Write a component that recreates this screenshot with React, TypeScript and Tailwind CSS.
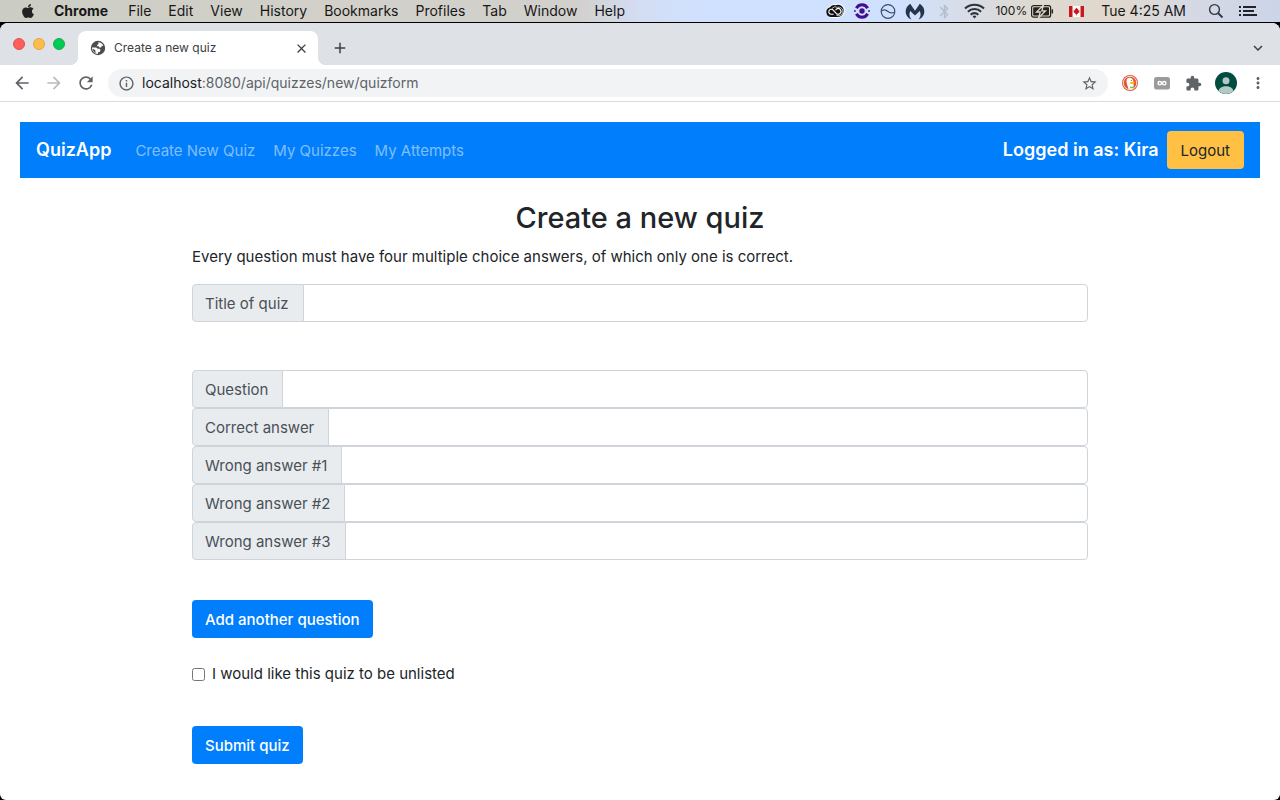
import { FaApple } from "react-icons/fa";
import {
  MdArrowBack,
  MdArrowForward,
  MdRefresh,
  MdInfoOutline,
  MdStarBorder,
  MdClose,
  MdAdd,
  MdExpandMore,
  MdMoreVert,
  MdExtension,
  MdBluetooth,
} from "react-icons/md";

const menus = ["File", "Edit", "View", "History", "Bookmarks", "Profiles", "Tab", "Window", "Help"];

const answerFields = [
  { id: "question", label: "Question" },
  { id: "correct", label: "Correct answer" },
  { id: "wrong1", label: "Wrong answer #1" },
  { id: "wrong2", label: "Wrong answer #2" },
  { id: "wrong3", label: "Wrong answer #3" },
];

function CloudIcon() {
  return (
    <svg width="20" height="16" viewBox="0 0 20 16" fill="none" aria-hidden="true">
      <path d="M6.500 15a6 6 0 0 1-2-11.500A6.500 6.500 0 0 1 10 1a6.800 6.800 0 0 1 9.600 6.800A6.800 6.800 0 0 1 13 15z" fill="#fff" />
      <path d="M6.300 14a5 5 0 0 1-1.400-9.800A5.800 5.800 0 0 1 10.500 2.200 5.900 5.900 0 0 1 18.700 8a5.900 5.900 0 0 1-5.900 6z" fill="#111" />
      <path d="M8.600 11.300H6.300a2.500 2.500 0 1 1 1.900-4.100l3 3.200a2.800 2.800 0 1 0 .2-4.200l-.9.900" stroke="#fff" strokeWidth="1.100" />
      <path d="M7 5.500a4.500 4.500 0 0 1 5.500-1.200 4.300 4.300 0 1 1-1.300 7.700" stroke="#fff" strokeWidth="0.700" />
    </svg>
  );
}

function EyeIcon() {
  return (
    <svg width="16" height="16" viewBox="0 0 16 16" fill="none" aria-hidden="true">
      <path d="M2.400 5.200a6.300 6.300 0 0 1 11.200 0M2.400 10.800a6.300 6.300 0 0 0 11.200 0" stroke="#43108f" strokeWidth="3" />
      <circle cx="8" cy="8" r="2.700" fill="#43108f" />
      <path d="M0 8h1.800M14.200 8H16" stroke="#43108f" strokeWidth="1.400" />
    </svg>
  );
}

function GaugeIcon() {
  return (
    <svg width="16" height="16" viewBox="0 0 16 16" fill="none" stroke="#3c4c66" strokeWidth="1.200" aria-hidden="true">
      <circle cx="8" cy="8.500" r="6.800" />
      <path d="M1.500 8.200c2.500-2.600 4.500-1.500 6.500.3s4.500 1.500 6.600.8" />
    </svg>
  );
}

function WingsIcon() {
  return (
    <svg width="20" height="17" viewBox="0 0 20 17" fill="#26354f" aria-hidden="true">
      <path d="M5.200.8C1 3.500-.2 8 1.300 11.800c.9 2.300 3 4 5.200 4.700-2.200-2.200-2.600-5.200-1.300-8.400L10 12.600l4.800-4.500c1.300 3.200.9 6.200-1.300 8.400 2.200-.7 4.300-2.400 5.200-4.700C20.200 8 19 3.500 14.800.8L10 7.800z" />
    </svg>
  );
}

function WifiIcon() {
  return (
    <svg width="21" height="16" viewBox="0 0 21 16" fill="none" stroke="#2d323c" strokeWidth="2.100" aria-hidden="true">
      <path d="M1 5.600a13.500 13.500 0 0 1 19 0M3.900 8.800a9.300 9.300 0 0 1 13.200 0M6.700 11.700a5.400 5.400 0 0 1 7.600 0" />
      <path d="M8.600 13.500 10.500 15.400l1.900-1.900a2.700 2.700 0 0 0-3.800 0z" fill="#2d323c" stroke="none" />
    </svg>
  );
}

function BatteryIcon() {
  return (
    <svg width="23" height="13" viewBox="0 0 23 13" fill="none" aria-hidden="true">
      <rect x="0.600" y="0.600" width="19" height="11.600" rx="2" stroke="#26231e" strokeWidth="1.200" />
      <rect x="2.200" y="2.200" width="15.800" height="8.400" rx="0.800" fill="#26231e" />
      <path d="M21.300 4.300v4.200" stroke="#26231e" strokeWidth="1.500" />
      <path d="m12.500 0-7 7h3.800L7.500 13l7-7.200h-3.700z" fill="#26231e" stroke="#ded7cf" strokeWidth="1.300" />
    </svg>
  );
}

function CanadaFlag() {
  return (
    <svg width="15" height="11" viewBox="0 0 15 11" aria-label="Canadian keyboard">
      <path fill="#fff" d="M0 0h15v11H0z" />
      <path fill="#c8171e" d="M0 0h3.500v11H0zM11.500 0H15v11h-3.500zM7.500 1.500l.8 1.500.9-.4-.2 2 1.500-.7-.4 1.400.5.600-2 1.500.2.800-1-.1V9.500h-.6V8.100l-1 .1.200-.8-2-1.500.5-.6L4.500 3.900l1.500.7-.2-2 .9.400z" />
    </svg>
  );
}

function SearchIcon() {
  return (
    <svg width="16" height="16" viewBox="0 0 16 16" fill="none" stroke="#33363f" strokeWidth="1.400" aria-hidden="true">
      <circle cx="6.500" cy="6.500" r="4.900" />
      <path d="m10 10 4.500 4.500" strokeWidth="1.800" />
    </svg>
  );
}

function ListIcon() {
  return (
    <svg width="19" height="12" viewBox="0 0 19 12" fill="none" stroke="#20232c" strokeWidth="2" aria-hidden="true">
      <path d="M0 2h2M4 2h13M0 6h2M4 6h11M0 10h2M4 10h14" />
    </svg>
  );
}

function GlobeIcon() {
  return (
    <svg width="16" height="16" viewBox="0 0 16 16" aria-hidden="true">
      <circle cx="8" cy="8" r="7.200" fill="#4a4d52" />
      <path d="M8.300 2.200c2.300.1 4.200 1.500 5 3.500l-1.500.3-.8 1.500H9.500L8.800 6.300H7.300L7 5l1.500-.8z" fill="#fff" />
      <path d="M2 7.500h4.200l1.500 1.300h2l.8 1.500-.8 1.600H8.200l-.3 2C4.700 13.900 2 11.200 2 7.500z" fill="#fff" />
      <path d="m2.600 9 1.600.2 1.300 1.500v2.500A6 6 0 0 1 2.600 9z" fill="#4a4d52" />
    </svg>
  );
}

function DuckIcon() {
  return (
    <svg width="16" height="16" viewBox="0 0 16 16" aria-hidden="true">
      <circle cx="8" cy="8" r="8" fill="#de5833" />
      <circle cx="8" cy="8" r="6.700" fill="none" stroke="#fff" strokeWidth="0.800" />
      <path d="M6.600 14.200C6 11.500 4.400 8.300 4.500 5.900 4.600 3.500 6.600 2.400 8.600 2.900c2 .5 2.900 2.100 2.800 4.100-.1 1.700.2 3.600.5 5.900-1.500 1.300-3.500 1.600-5.300 1.300z" fill="#fff" />
      <path d="M8.300 7.200c1.500-.7 3.600-.6 4.700-.2-.7 1.400-2.400 2.300-4.700 2.100z" fill="#fdb913" />
      <path d="m8.200 11.300 1.600.8 2-.8v2.200l-2-.5-1.600.5z" fill="#67bd47" />
      <circle cx="9.300" cy="5.400" r="0.500" fill="#2d4f8e" />
    </svg>
  );
}

function LoopIcon() {
  return (
    <svg width="16" height="13" viewBox="0 0 16 13" fill="none" aria-hidden="true">
      <rect width="16" height="12.500" rx="2.500" fill="#9b9b9b" />
      <circle cx="5.800" cy="6.200" r="1.700" stroke="#fff" strokeWidth="1.400" />
      <circle cx="10.200" cy="6.200" r="1.700" stroke="#fff" strokeWidth="1.400" />
    </svg>
  );
}

function AvatarIcon() {
  return (
    <svg width="22" height="22" viewBox="0 0 22 22" aria-hidden="true">
      <circle cx="11" cy="11" r="11" fill="#004d40" />
      <circle cx="11" cy="8.800" r="3.500" fill="#b2c9c5" />
      <path d="M3.700 19.200c0-3.500 3.600-5 7.300-5s7.300 1.500 7.300 5A11 11 0 0 1 11 22a11 11 0 0 1-7.300-2.800z" fill="#b2c9c5" />
    </svg>
  );
}

function MenuBar() {
  return (
    <div className="flex h-[23px] items-center justify-between border-b border-black bg-[linear-gradient(90deg,#cbcdc5_0%,#d2d0c9_25%,#d2d0cc_45%,#d3ddf3_50%,#d0e1ff_55%,#d0e1ff_70%,#ded9d2_80%,#e0d8cc_87%,#d6d9e4_93%,#ccd4e8_100%)] text-sm text-[#171717]">
      <div className="flex items-center">
        <FaApple size={16} className="ml-5 text-[#222]" />
        <strong className="ml-[18px] font-bold">Chrome</strong>
        <nav className="ml-5 flex gap-[17px]" aria-label="Application menu">
          {menus.map((m) => (
            <span key={m}>{m}</span>
          ))}
        </nav>
      </div>
      <div className="flex items-center pr-[22px]">
        <CloudIcon />
        <span className="ml-[9px]"><EyeIcon /></span>
        <span className="ml-[10px]"><GaugeIcon /></span>
        <span className="ml-[9px]"><WingsIcon /></span>
        <MdBluetooth size={17} className="ml-[11px] text-[#b2bdd0]" />
        <span className="ml-[11px]"><WifiIcon /></span>
        <span className="ml-[10px] text-xs">100%</span>
        <span className="ml-1"><BatteryIcon /></span>
        <span className="ml-[15px]"><CanadaFlag /></span>
        <span className="ml-[17px]">Tue 4:25 AM</span>
        <span className="ml-[22px]"><SearchIcon /></span>
        <span className="ml-[15px]"><ListIcon /></span>
      </div>
    </div>
  );
}

function TabStrip() {
  return (
    <div className="flex h-[42px] items-end rounded-t-lg bg-[#dee1e6] pr-[13px]">
      <div className="flex h-[42px] items-center gap-2 pl-[13px]">
        <span className="size-3 rounded-full border border-[#e0504c] bg-[#ff5f5a]" />
        <span className="size-3 rounded-full border border-[#e0a544] bg-[#febc4a]" />
        <span className="size-3 rounded-full border border-[#12b04a] bg-[#00ca56]" />
      </div>
      <div className="ml-[5px] h-2 w-2 bg-[radial-gradient(circle_at_0_0,#dee1e6_8px,#ffffff_8px)]" />
      <div className="flex h-[34px] w-60 items-center rounded-t-lg bg-white pr-[9px] pl-3 text-[#3c4043]">
        <GlobeIcon />
        <span className="ml-2 flex-1 text-xs">Create a new quiz</span>
        <button type="button" aria-label="Close tab"><MdClose size={15} /></button>
      </div>
      <div className="h-2 w-2 bg-[radial-gradient(circle_at_100%_0,#dee1e6_8px,#ffffff_8px)]" />
      <button type="button" aria-label="New tab" className="mb-2 ml-[5px] text-[#3c4043]"><MdAdd size={18} /></button>
      <button type="button" aria-label="Search tabs" className="mb-2 ml-auto text-[#3c4043]"><MdExpandMore size={18} /></button>
    </div>
  );
}

function Toolbar() {
  return (
    <div className="flex h-[37px] items-center border-b border-[#dadce0] bg-white pr-[13px] pl-3 text-[#5f6368]">
      <button type="button" aria-label="Back"><MdArrowBack size={20} /></button>
      <button type="button" aria-label="Forward" className="ml-3 text-[#babcbe]"><MdArrowForward size={20} /></button>
      <button type="button" aria-label="Reload" className="ml-3"><MdRefresh size={20} /></button>
      <div className="ml-3 flex h-7 flex-1 items-center rounded-full bg-[#f1f3f4] pr-2.5 pl-2.5">
        <MdInfoOutline size={17} />
        <span className="ml-[7px] flex-1 text-sm"><span className="text-[#202124]">localhost</span>:8080/api/quizzes/new/quizform</span>
        <MdStarBorder size={17} />
      </div>
      <span className="ml-3.5"><DuckIcon /></span>
      <span className="ml-4"><LoopIcon /></span>
      <MdExtension size={17} className="ml-[15px]" />
      <span className="ml-[13px]"><AvatarIcon /></span>
      <button type="button" aria-label="Chrome menu" className="ml-3"><MdMoreVert size={18} /></button>
    </div>
  );
}

function InputGroup({ id, label }: { id: string; label: string }) {
  return (
    <div className="flex h-[38px]">
      <label htmlFor={id} className="flex items-center rounded-l border border-[#ced4da] bg-[#e9ecef] pt-0.5 pr-3.5 pl-3 text-[#495057]">
        {label}
      </label>
      <input id={id} type="text" className="-ml-px min-w-0 flex-1 rounded-r border border-[#ced4da] bg-white px-3 outline-none focus:border-[#80bdff]" />
    </div>
  );
}

export default function App() {
  return (
    <div className="flex min-h-screen flex-col bg-black font-['Inter','Liberation_Sans',sans-serif]">
      <MenuBar />
      <div className="flex-1 rounded-t-lg rounded-b-md bg-white">
        <TabStrip />
        <Toolbar />
        <main className="p-5 text-[15px] leading-6 text-[#212529]">
          <header className="flex h-14 items-center bg-[#007efc] px-4 text-white">
            <a href="#home" className="text-lg font-semibold">QuizApp</a>
            <nav className="ml-6 flex gap-[18px] pt-0.5 text-white/50">
              <a href="#create">Create New Quiz</a>
              <a href="#quizzes">My Quizzes</a>
              <a href="#attempts">My Attempts</a>
            </nav>
            <span className="ml-auto text-lg font-semibold">Logged in as: Kira</span>
            <button type="button" className="ml-2 h-[38px] rounded bg-[#ffc044] px-3.5 pt-0.5 text-[#212529]">Logout</button>
          </header>
          <form className="mx-auto mt-[21px] w-[896px] max-w-full" onSubmit={(e) => e.preventDefault()}>
            <h1 className="mb-2 text-center text-[29px] leading-[38px] font-medium">Create a new quiz</h1>
            <p className="mb-[15px]">Every question must have four multiple choice answers, of which only one is correct.</p>
            <InputGroup id="title" label="Title of quiz" />
            <div className="mt-12">
              {answerFields.map((f) => (
                <InputGroup key={f.id} id={f.id} label={f.label} />
              ))}
            </div>
            <button type="button" className="mt-10 block h-[38px] rounded bg-[#007efc] px-[13px] pt-0.5 font-medium text-white">Add another question</button>
            <div className="mt-6 flex items-center">
              <input id="unlisted" type="checkbox" className="size-[13px]" />
              <label htmlFor="unlisted" className="ml-[7px]">I would like this quiz to be unlisted</label>
            </div>
            <button type="submit" className="mt-10 block h-[38px] rounded bg-[#007efc] px-[13px] pt-0.5 font-medium text-white">Submit quiz</button>
          </form>
        </main>
      </div>
    </div>
  );
}
